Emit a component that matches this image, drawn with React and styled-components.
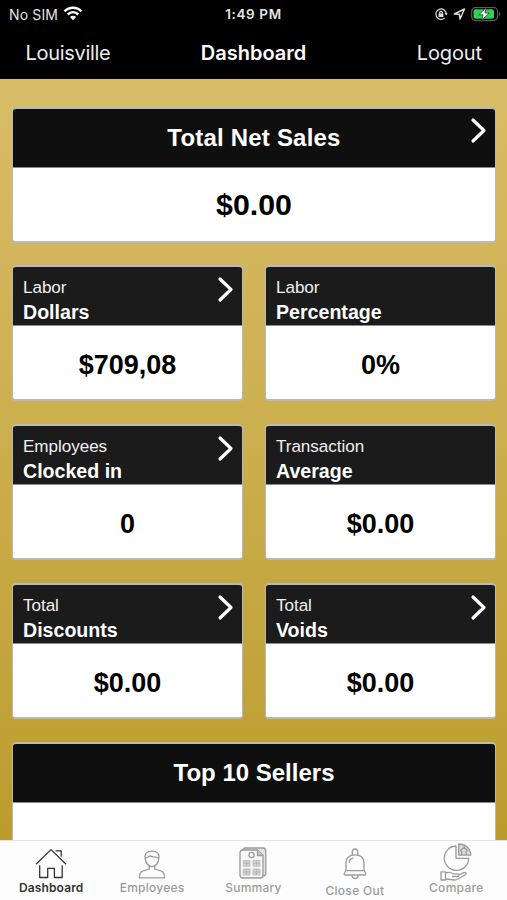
import React from 'react'
import styled, { createGlobalStyle } from 'styled-components'

const GlobalStyle = createGlobalStyle`
    * { box-sizing: border-box; }
    body { margin: 0; overflow: hidden; }
`;

const Screen = styled.div`
    display: flex;
    flex-direction: column;
    height: 900px;
    width: 507px;
    overflow: hidden;
    background: linear-gradient(#d9bc67 79px, #cdb050 410px, #bc9c2e 840px);
    font-family: "Liberation Sans", Arial, sans-serif;
`;

const TopBar = styled.header`
    flex: none;
    height: 79px;
    background: black;
    color: white;
    font-family: Inter, sans-serif;
`;

const StatusBar = styled.div`
    display: grid;
    grid-template-columns: 1fr auto 1fr;
    align-items: center;
    height: 28px;
    padding: 0 6px 0 9px;
    font-size: 14px;
    color: #e4e4e4;
`;

const StatusGroup = styled.div`
    display: flex;
    align-items: center;
    justify-content: ${p => p.$end ? 'flex-end' : 'flex-start'};
    gap: 5px;
    letter-spacing: .15px;
`;

const Clock = styled.div`
    margin-right: 3px;
    font-weight: 600;
    font-size: 13.5px;
    letter-spacing: .6px;
`;

const NavBar = styled.div`
    display: grid;
    grid-template-columns: 1fr auto 1fr;
    align-items: center;
    height: 50px;
    padding: 0 25px;
    font-size: 20px;
`;

const NavLink = styled.div`
    padding-left: .5px;
    text-align: ${p => p.$right ? 'right' : 'left'};
    letter-spacing: ${p => p.$spacing || '0'};
    color: #ececec;
`;

const Title = styled.div`
    font-weight: 600;
    letter-spacing: 0;
`;

const Content = styled.main`
    flex: 1;
    min-height: 0;
    overflow: hidden;
    padding: 27.5px 11px 0 12px;
`;

const Grid = styled.div`
    display: grid;
    grid-template-columns: 1fr 1fr;
    grid-auto-rows: 136px;
    column-gap: 22px;
    row-gap: 22.9px;
`;

const Card = styled.section`
    display: flex;
    flex-direction: column;
    grid-column: ${p => p.$wide ? 'span 2' : 'auto'};
    border: 1.5px solid #b7babd;
    border-width: 2px 1.5px;
    border-radius: 4px;
    background: white;
    overflow: hidden;
`;

const CardHeader = styled.div`
    position: relative;
    display: flex;
    flex-direction: column;
    justify-content: center;
    flex: none;
    height: 59px;
    padding: ${p => p.$wide ? '0' : '6px 10px 0'};
    align-items: ${p => p.$wide ? 'center' : 'flex-start'};
    background: ${p => p.$wide ? '#0f0f0f' : '#1b1b1b'};
    border-bottom: 1px solid #8c8c8c;
    color: white;
`;

const Heading = styled.div`
    font-size: 24px;
    font-weight: bold;
    letter-spacing: ${p => p.$spacing || '0'};
`;

const Caption = styled.div`
    font-size: 17.1px;
    line-height: 25px;
    color: #f0f0f0;
    letter-spacing: -.05px;
`;

const Name = styled.div`
    font-size: 19.6px;
    font-weight: bold;
    line-height: 24px;
`;

const Value = styled.div`
    display: flex;
    flex: 1;
    align-items: center;
    justify-content: center;
    padding-top: ${p => p.$wide ? '2px' : '5px'};
    font-size: ${p => p.$wide ? '30.3px' : '27px'};
    font-weight: bold;
    color: black;
`;

const Chevron = styled.svg`
    position: absolute;
    top: 8.5px;
    right: 8px;
    width: 17px;
    height: 27px;
    fill: none;
    stroke: white;
    stroke-width: 3.2;
    stroke-linecap: round;
    stroke-linejoin: round;
`;

const TabBar = styled.nav`
    display: grid;
    grid-template-columns: repeat(5, 1fr);
    flex: none;
    height: 60px;
    border-top: 1px solid #e4e4e4;
    background: #fdfdfd;
`;

const Tab = styled.div`
    display: flex;
    flex-direction: column;
    align-items: center;
    padding-top: ${p => p.$top || 7}px;
    padding-left: ${p => p.$active ? '1px' : '0'};
    color: ${p => p.$active ? '#333' : '#9b9b9b'};
    font-family: Inter, sans-serif;
    font-size: 12px;
    font-weight: ${p => p.$active ? 600 : 500};
    line-height: 15px;
    letter-spacing: ${p => p.$spacing || '.25px'};
`;

const TabIcon = styled.svg`
    flex: none;
    margin-bottom: 1px;
    fill: none;
    stroke: currentColor;
    stroke-width: 1.3;
    stroke-linejoin: round;
`;

const cards = [
    { caption: 'Labor', name: 'Dollars', value: '$709,08', link: true },
    { caption: 'Labor', name: 'Percentage', value: '0%' },
    { caption: 'Employees', name: 'Clocked in', value: '0', link: true },
    { caption: 'Transaction', name: 'Average', value: '$0.00' },
    { caption: 'Total', name: 'Discounts', value: '$0.00', link: true },
    { caption: 'Total', name: 'Voids', value: '$0.00', link: true }
]

const Arrow = () => (
    <Chevron viewBox='0 0 17 27'>
        <path d='M3 3L14 13.5L3 24' />
    </Chevron>
)

const WifiIcon = () => (
    <svg width='20' height='16' viewBox='0 0 20 16' fill='none' stroke='white' strokeWidth='2.5'>
        <path d='M1.5 5.3C6.3 .4 13.7 .4 18.5 5.3' />
        <path d='M4.7 8.5C7.8 5.4 12.2 5.4 15.3 8.5' />
        <path d='M10 14.3L6.9 11Q10 8.4 13.1 11Z' fill='white' stroke='none' />
    </svg>
)

const LockIcon = () => (
    <svg width='14' height='14' viewBox='0 0 14 14' fill='none' stroke='#ddd' strokeWidth='1.2'>
        <path d='M10.7 10.8A5.2 5.2 0 1 1 12.2 7.5' />
        <path d='M10.7 6.3L12.2 8.4L13.7 6.3Z' fill='#ddd' stroke='none' />
        <rect x='4.6' y='6.4' width='4.8' height='3.6' fill='#ddd' stroke='none' />
        <path d='M5.6 6.5V5.4Q7 3.3 8.4 5.4V6.5' />
    </svg>
)

const LocationIcon = () => (
    <svg width='13' height='13' viewBox='0 0 13 13' fill='none' stroke='#ddd' strokeWidth='1.4' strokeLinejoin='round'>
        <path d='M1.3 6L11.5 1L6.9 11.1L6.4 6.3Z' />
    </svg>
)

const BatteryIcon = () => (
    <svg width='30' height='15' viewBox='0 0 30 15'>
        <rect x='.7' y='.4' width='25.8' height='13.2' rx='4' fill='none' stroke='#5d5d5d' strokeWidth='1.2' />
        <rect x='2.5' y='2.2' width='20.5' height='9.6' rx='2.2' fill='#30d158' />
        <path d='M28 4.7Q31 7 28 9.3Z' fill='#5d5d5d' />
        <path d='M15.2 .7L7.8 7.8H12L10.6 13.6L18.2 6H14Z' fill='white' stroke='#0b2a12' strokeWidth='.7' />
    </svg>
)

const HomeIcon = () => (
    <TabIcon width='32' height='31' viewBox='0 0 32 31'>
        <path d='M1 16.3L16 1.6L31 16.3M20.5 2.8H26.2V8.5' />
        <path d='M4.7 17.3V29.5H12.7V20.3H19.4V29.5H27.2V17.3' />
    </TabIcon>
)

const PersonIcon = () => (
    <TabIcon width='28' height='30' viewBox='0 0 28 30'>
        <path d='M7.2 9.5C6 5 9 2.2 14 2.2S22 5 20.8 9.5C20.6 14 17.5 17.6 14 17.6S7.4 14 7.2 9.5Z' />
        <path d='M7.2 9.4C10 9 11 7 12 6.8C14 9 17 6.5 20.8 9.4' />
        <path d='M11.3 17V20L4.7 22.2C1.8 23.2 1.5 25.5 1.5 28.8H26.5C26.5 25.5 26.2 23.2 23.3 22.2L16.7 20V17' />
    </TabIcon>
)

const ReportIcon = () => (
    <TabIcon width='28' height='32' viewBox='0 0 28 32'>
        <rect x='3.2' y='1' width='23.6' height='28' rx='3' fill='#e4e4e4' />
        <path d='M4 3H18.5L24 8.5V28Q24 31 21 31H4Q1 31 1 28V6Q1 3 4 3Z' fill='#f6f6f6' />
        <path d='M18.5 3V8.5H24' fill='#ccc' />
        <circle cx='12.5' cy='8' r='2.6' />
        <g stroke='#b3b3b3'>
            <path d='M4.3 13.5H11V19.3H4.3ZM14 13.5H21V19.3H14ZM4.3 22H11V28H4.3ZM14 22H21V28H14Z' fill='#d2d2d2' strokeWidth='.7' />
            <path d='M4.3 16.4H11M14 16.4H21M4.3 25H11M14 25H21M7.6 13.5V19.3M17.5 13.5V19.3M7.6 22V28M17.5 22V28' strokeWidth='.8' />
        </g>
    </TabIcon>
)

const BellIcon = () => (
    <TabIcon width='24' height='34' viewBox='0 0 24 34'>
        <path d='M9.3 7.3V4Q9.3 1 12 1T14.7 4V7.3' />
        <path d='M3 23V14.5C3 9.5 6.7 6.8 12 6.8S21 9.5 21 14.5V23' />
        <path d='M6.2 15C6.2 12 8 10.2 10.8 9.8' />
        <path d='M2.8 22.7H21.2L22.8 25.5Q23 27 21.5 27H2.5Q1 27 1.2 25.5Z' />
        <path d='M8.8 27.3Q9.3 30.5 12 30.5T15.2 27.3' />
    </TabIcon>
)

const CompareIcon = () => (
    <TabIcon width='32' height='36' viewBox='0 0 32 36' overflow='visible'>
        <path d='M16 3A12.2 12.2 0 1 0 28.7 15.3H16Z' />
        <path d='M18.7 1C25 1 30.7 5.5 30.7 12.2H18.7Z' fill='#ddd' />
        <path d='M20 8L24 4.3L27.7 8M21.7 8V12M26.1 8V12' />
        <path d='M1 28.8H5.5V37H1ZM5.5 30.2C9 28.5 11 29.3 13.3 30.8H17.5C19.8 31 19 33.5 17 33.5H12M18.8 32L24 29.7C26 29 27 30.5 25.3 31.8L18 36Q16.5 37 14.5 37L5.5 36' />
    </TabIcon>
)

export default function App() {
    return (
        <Screen>
            <GlobalStyle />
            <TopBar>
                <StatusBar>
                    <StatusGroup>No SIM <WifiIcon /></StatusGroup>
                    <Clock>1:49 PM</Clock>
                    <StatusGroup $end>
                        <LockIcon />
                        <LocationIcon />
                        <BatteryIcon />
                    </StatusGroup>
                </StatusBar>
                <NavBar>
                    <NavLink $spacing='-.3px'>Louisville</NavLink>
                    <Title>Dashboard</Title>
                    <NavLink $right $spacing='-.1px'>Logout</NavLink>
                </NavBar>
            </TopBar>

            <Content>
                <Grid>
                    <Card $wide>
                        <CardHeader $wide>
                            <Heading $spacing='.2px'>Total Net Sales</Heading>
                            <Arrow />
                        </CardHeader>
                        <Value $wide>$0.00</Value>
                    </Card>
                    {cards.map(card => (
                        <Card key={card.caption + card.name}>
                            <CardHeader>
                                <Caption>{card.caption}</Caption>
                                <Name>{card.name}</Name>
                                {card.link && <Arrow />}
                            </CardHeader>
                            <Value>{card.value}</Value>
                        </Card>
                    ))}
                    <Card $wide>
                        <CardHeader $wide>
                            <Heading>Top 10 Sellers</Heading>
                        </CardHeader>
                    </Card>
                </Grid>
            </Content>

            <TabBar>
                <Tab $active $spacing='.15px'><HomeIcon />Dashboard</Tab>
                <Tab $top={8}><PersonIcon />Employees</Tab>
                <Tab $top={6}><ReportIcon />Summary</Tab>
                <Tab $top={7} $spacing='.3px'><BellIcon />Close Out</Tab>
                <Tab $top={2} $spacing='.3px'><CompareIcon />Compare</Tab>
            </TabBar>
        </Screen>
    )
}
